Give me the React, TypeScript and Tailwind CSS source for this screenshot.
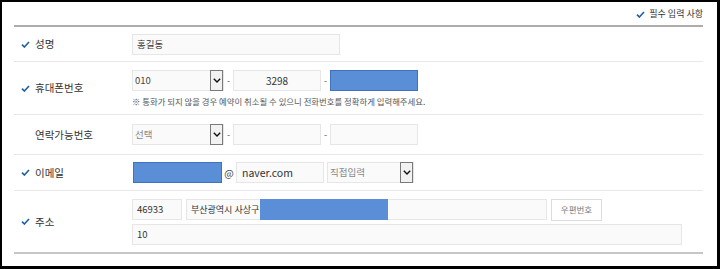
import React from "react";

const F = { fontFamily: '"Noto Sans CJK KR", "Noto Sans", sans-serif' };

function Check() {
  return (
    <svg width="9" height="7" viewBox="0 0 9 7" className="shrink-0">
      <polyline points="1,3.6 3.4,6 8,1" fill="none" stroke="#1d5ea8" strokeWidth="1.6" />
    </svg>
  );
}

function Label({ text, check = true }: { text: string; check?: boolean }) {
  return (
    <div className="w-[118px] shrink-0 flex items-center pl-[7px] gap-[5px] text-[10.5px] text-[#333]">
      <div className="w-[9px] flex">{check ? <Check /> : null}</div>
      <span>{text}</span>
    </div>
  );
}

function Box({ w, children, className = "" }: { w: string; children?: React.ReactNode; className?: string }) {
  return (
    <div className={`${w} h-[21px] border border-[#e6e6e6] bg-[#fafafa] flex items-center px-[4px] text-[#333] ${className}`}>
      {children}
    </div>
  );
}

function Blue({ w }: { w: string }) {
  return <div className={`${w} h-[21px] bg-[#5a8fd8] border border-[#3d72c2]`} />;
}

function Select({ w, text, muted }: { w: string; text: string; muted?: boolean }) {
  return (
    <div className={`${w} h-[21px] flex border border-[#e6e6e6] bg-[#fafafa]`}>
      <div className={`flex-1 flex items-center px-[2px] text-[9.5px] ${muted ? "text-[#888]" : "text-[#444]"}`}>{text}</div>
      <div className="w-[13px] h-[21px] -my-[1px] border border-[#7a7a7a] bg-[#f2f2f2] flex items-center justify-center">
        <svg width="8" height="5" viewBox="0 0 8 5">
          <polyline points="0.8,0.8 4,4 7.2,0.8" fill="none" stroke="#111" strokeWidth="1.4" />
        </svg>
      </div>
    </div>
  );
}

function Dash() {
  return <span className="w-[9px] text-center text-[9px] text-[#555]">-</span>;
}

export default function App() {
  return (
    <div style={F} className="w-[720px] h-[269px] bg-white border-l-2 border-t-2 border-r-[3px] border-b-[3px] border-black pl-[12px] pr-[14px] overflow-hidden">
      <div className="h-[23px] flex items-center justify-end gap-[4px] pt-[1px]">
        <Check />
        <span className="text-[9px] text-[#333]">필수 입력 사항</span>
      </div>
      <div className="h-[2px] bg-[#acacac]" />
      <div className="h-[35px] flex items-center border-b border-[#e8e8e8]">
        <Label text="성명" />
        <Box w="w-[208px]"><span className="text-[9.5px]">홍길동</span></Box>
      </div>
      <div className="h-[53px] flex items-center border-b border-[#e8e8e8]">
        <Label text="휴대폰번호" />
        <div className="flex flex-col gap-[5px] pt-[1px]">
          <div className="flex items-center">
            <Select w="w-[92px]" text="010" />
            <Dash />
            <Box w="w-[88px]" className="justify-center"><span className="text-[10px]">3298</span></Box>
            <Dash />
            <Blue w="w-[88px]" />
          </div>
          <div className="text-[8.4px] text-[#555] leading-[11px]">※ 통화가 되지 않을 경우 예약이 취소될 수 있으니 전화번호를 정확하게 입력해주세요.</div>
        </div>
      </div>
      <div className="h-[40px] flex items-center border-b border-[#e8e8e8]">
        <Label text="연락가능번호" check={false} />
        <div className="flex items-center">
          <Select w="w-[92px]" text="선택" muted />
          <Dash />
          <Box w="w-[88px]" />
          <Dash />
          <Box w="w-[88px]" />
        </div>
      </div>
      <div className="h-[36px] flex items-center border-b border-[#e8e8e8]">
        <Label text="이메일" />
        <div className="flex items-center">
          <div className="w-[1px]" />
          <Blue w="w-[89px]" />
          <span className="w-[14px] text-center text-[10px] text-[#444]">@</span>
          <Box w="w-[88px]"><span className="text-[10.5px] pl-[1px]">naver.com</span></Box>
          <div className="w-[3px]" />
          <Select w="w-[87px]" text="직접입력" muted />
        </div>
      </div>
      <div className="h-[61px] flex items-center">
        <Label text="주소" />
        <div className="flex flex-col gap-[3px]">
          <div className="flex items-center">
            <Box w="w-[50px]"><span className="text-[9.5px]">46933</span></Box>
            <div className="w-[4px]" />
            <div className="w-[361px] h-[21px] border border-[#e6e6e6] bg-[#fafafa] flex items-center pl-[4px]">
              <span className="w-[69px] text-[9px] text-[#333] whitespace-nowrap">부산광역시 사상구</span>
              <div className="w-[128px] h-[21px] bg-[#5a8fd8]" />
            </div>
            <div className="w-[4px]" />
            <div className="w-[51px] h-[22px] border border-[#dcdcdc] bg-white flex items-center justify-center text-[8.5px] text-[#777]">우편번호</div>
          </div>
          <Box w="w-[550px]"><span className="text-[9.5px]">10</span></Box>
        </div>
      </div>
      <div className="h-[2px] bg-[#c6c6c6]" />
    </div>
  );
}
